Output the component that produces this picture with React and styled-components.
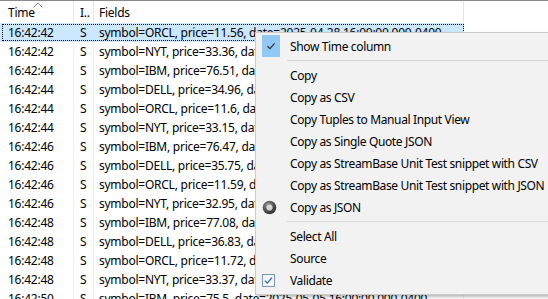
import React from 'react';
import styled, { createGlobalStyle } from 'styled-components';

const GlobalStyle = createGlobalStyle`
  html, body {
    margin: 0;
    padding: 0;
    background: #ffffff;
    overflow: hidden;
  }
  body {
    font-family: "Noto Sans", "Liberation Sans", sans-serif;
    font-size: 12px;
    color: #000;
  }
`;

const Frame = styled.div`
  position: relative;
  width: 548px;
  height: 299px;
  overflow: hidden;
  border-top: 1px solid #8a8a8a;
  box-sizing: border-box;
  letter-spacing: -0.25px;
`;

const Header = styled.div`
  display: grid;
  grid-template-columns: 74px 20px 370px;
  height: 22px;
`;

const HeaderCell = styled.div`
  position: relative;
  display: flex;
  align-items: center;
  padding-left: ${p => p.$pad}px;
  border-right: 1px solid #e5e5e5;
  white-space: nowrap;
  overflow: hidden;
`;

const SortArrow = styled.svg`
  position: absolute;
  left: 33px;
  top: 1px;
`;

const Row = styled.div`
  position: relative;
  display: grid;
  grid-template-columns: 74px 20px 370px;
  height: 19px;
  background: ${p => (p.$selected ? '#cce8ff' : 'transparent')};
  width: 464px;

  ${p => p.$selected && `
    &::after {
      content: '';
      position: absolute;
      left: 2px;
      right: 0;
      top: 1px;
      bottom: 1px;
      border: 1px dotted #000;
    }
  `}
`;

const Cell = styled.div`
  display: flex;
  align-items: center;
  padding-left: ${p => p.$pad}px;
  border-right: 1px solid ${p => (p.$selected ? '#cce8ff' : '#f0f0f0')};
  white-space: nowrap;
  overflow: hidden;
`;

const Menu = styled.div`
  position: absolute;
  left: 255px;
  top: 31px;
  width: 310px;
  padding: 2px 0 3px;
  background: #f2f2f2;
  border: 1px solid #cccccc;
  box-shadow: 2px 2px 3px rgba(0, 0, 0, 0.28);
  letter-spacing: -0.36px;
`;

const Item = styled.div`
  display: flex;
  align-items: center;
  height: 22px;
  white-space: nowrap;
`;

const IconSlot = styled.div`
  width: 34px;
  height: 22px;
  display: flex;
  align-items: center;
  justify-content: flex-start;
  padding-left: 6px;
  box-sizing: border-box;
`;

const CheckBox = styled.div`
  width: 18px;
  height: 22px;
  background: ${p => (p.$active ? '#90c8f6' : 'transparent')};
  display: flex;
  align-items: center;
  justify-content: center;
`;

const Separator = styled.div`
  height: 7px;
  display: flex;
  align-items: center;
  padding-left: 31px;

  &::before {
    content: '';
    flex: 1;
    height: 1px;
    background: #d7d7d7;
  }
`;

const rows = [
  ['16:42:42', 'ORCL', '11.56', '2025-04-28'],
  ['16:42:42', 'NYT', '33.36', '2025-04-28'],
  ['16:42:44', 'IBM', '76.51', '2025-04-29'],
  ['16:42:44', 'DELL', '34.96', '2025-04-29'],
  ['16:42:44', 'ORCL', '11.6', '2025-04-29'],
  ['16:42:44', 'NYT', '33.15', '2025-04-29'],
  ['16:42:46', 'IBM', '76.47', '2025-04-30'],
  ['16:42:46', 'DELL', '35.75', '2025-04-30'],
  ['16:42:46', 'ORCL', '11.59', '2025-04-30'],
  ['16:42:46', 'NYT', '32.95', '2025-04-30'],
  ['16:42:48', 'IBM', '77.08', '2025-05-01'],
  ['16:42:48', 'DELL', '36.83', '2025-05-01'],
  ['16:42:48', 'ORCL', '11.72', '2025-05-01'],
  ['16:42:48', 'NYT', '33.37', '2025-05-01'],
  ['16:42:50', 'IBM', '75.5', '2025-05-05'],
];

const Tick = ({ color = '#333', w = 10 }) => (
  <svg width={w} height={w} viewBox="0 0 10 10">
    <path d="M1.5 5.2 L4 7.6 L8.6 2.4" fill="none" stroke={color} strokeWidth="1.3" />
  </svg>
);

const Radio = () => (
  <svg width="15" height="15" viewBox="0 0 15 15">
    <defs>
      <radialGradient id="rg" cx="40%" cy="35%" r="70%">
        <stop offset="0%" stopColor="#a0a0a0" />
        <stop offset="60%" stopColor="#4e4e4e" />
        <stop offset="100%" stopColor="#2e2e2e" />
      </radialGradient>
    </defs>
    <circle cx="7.5" cy="7.5" r="6.8" fill="url(#rg)" />
    <circle cx="7.5" cy="7.5" r="3" fill="#d4d4d4" />
  </svg>
);

const Checked = () => (
  <svg width="13" height="13" viewBox="0 0 13 13">
    <rect x="0.5" y="0.5" width="12" height="12" fill="#f4f7fb" stroke="#7b98c2" />
    <path d="M2.8 6.6 L5.3 9 L10 3.6" fill="none" stroke="#3f6aa8" strokeWidth="1.3" />
  </svg>
);

const menuItems = [
  { label: 'Show Time column', icon: 'check' },
  { sep: true },
  { label: 'Copy' },
  { label: 'Copy as CSV' },
  { label: 'Copy Tuples to Manual Input View' },
  { label: 'Copy as Single Quote JSON' },
  { label: 'Copy as StreamBase Unit Test snippet with CSV' },
  { label: 'Copy as StreamBase Unit Test snippet with JSON' },
  { label: 'Copy as JSON', icon: 'radio' },
  { sep: true },
  { label: 'Select All' },
  { label: 'Source' },
  { label: 'Validate', icon: 'box' },
];

const App = () => (
  <>
    <GlobalStyle />
    <Frame>
      <Header>
        <HeaderCell $pad={8}>
          Time
          <SortArrow width="10" height="6" viewBox="0 0 10 6">
            <path d="M0.5 5.5 L5 1 L9.5 5.5" fill="none" stroke="#8a8a8a" strokeWidth="1" />
          </SortArrow>
        </HeaderCell>
        <HeaderCell $pad={6}>I..</HeaderCell>
        <HeaderCell $pad={5}>Fields</HeaderCell>
      </Header>
      {rows.map(([t, sym, price, date], i) => (
        <Row key={i} $selected={i === 0}>
          <Cell $pad={8} $selected={i === 0}>{t}</Cell>
          <Cell $pad={6} $selected={i === 0}>S</Cell>
          <Cell $pad={5} $selected={i === 0}>
            symbol={sym}, price={price}, date={date} 16:00:00.000-0400
          </Cell>
        </Row>
      ))}
      <Menu>
        {menuItems.map((m, i) =>
          m.sep ? (
            <Separator key={i} />
          ) : (
            <Item key={i}>
              <IconSlot>
                {m.icon === 'check' && (
                  <CheckBox $active>
                    <Tick />
                  </CheckBox>
                )}
                {m.icon === 'radio' && <Radio />}
                {m.icon === 'box' && <Checked />}
              </IconSlot>
              {m.label}
            </Item>
          )
        )}
      </Menu>
    </Frame>
  </>
);

export default App;
